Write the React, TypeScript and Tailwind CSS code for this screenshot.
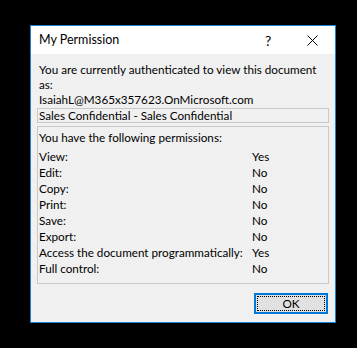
const permissions = [
  { label: 'View:', value: 'Yes' },
  { label: 'Edit:', value: 'No' },
  { label: 'Copy:', value: 'No' },
  { label: 'Print:', value: 'No' },
  { label: 'Save:', value: 'No' },
  { label: 'Export:', value: 'No' },
  { label: 'Access the document programmatically:', value: 'Yes' },
  { label: 'Full control:', value: 'No' },
];

export default function App() {
  return (
    <div
      className="w-[357px] h-[348px] bg-black pt-[25px] pl-[30px] text-[11.7px] text-black"
      style={{ fontFamily: 'Lato, "Liberation Sans", sans-serif' }}
    >
      <div className="w-[306px] h-[298px] border border-[#1883d7] bg-[#f0f0f0] flex flex-col">
        {/* title bar */}
        <div className="h-[28px] bg-white flex items-center pl-[8px] pt-[1px]">
          <span className="text-[12.5px] flex-1">My Permission</span>
          <span className="text-[14px] w-[10px] mr-[32px]">?</span>
          <svg width="11" height="11" viewBox="0 0 11 11" className="mr-[17px]">
            <path d="M0.5 0.5 L10.5 10.5 M10.5 0.5 L0.5 10.5" stroke="#000" strokeWidth="1" fill="none" />
          </svg>
        </div>

        <div className="flex flex-col px-[6px] pt-[8px]">
          <div className="pl-[2px] leading-[15px]">
            <p>You are currently authenticated to view this document as:</p>
            <p>IsaiahL@M365x357623.OnMicrosoft.com</p>
          </div>

          <div className="mt-[1px] h-[15px] border border-[#c8c8c8] pl-[1px] leading-[13px]">
            Sales Confidential - Sales Confidential
          </div>

          <div className="mt-[3px] h-[158px] border border-[#c8c8c8] pl-[1px] pt-[2px]">
            <div className="leading-[16px] mb-[3px]">You have the following permissions:</div>
            {permissions.map((p) => (
              <div key={p.label} className="grid grid-cols-[213px_1fr] leading-[16px]">
                <span className="whitespace-nowrap">{p.label}</span>
                <span>{p.value}</span>
              </div>
            ))}
          </div>

          <div className="flex justify-end mt-[9px] mr-[1px]">
            <button className="w-[74px] h-[21px] border-2 border-[#0078d7] bg-[#e1e1e1] p-[1px]">
              <div className="w-full h-full border border-dotted border-black flex items-center justify-center leading-none">
                OK
              </div>
            </button>
          </div>
        </div>
      </div>
    </div>
  );
}
